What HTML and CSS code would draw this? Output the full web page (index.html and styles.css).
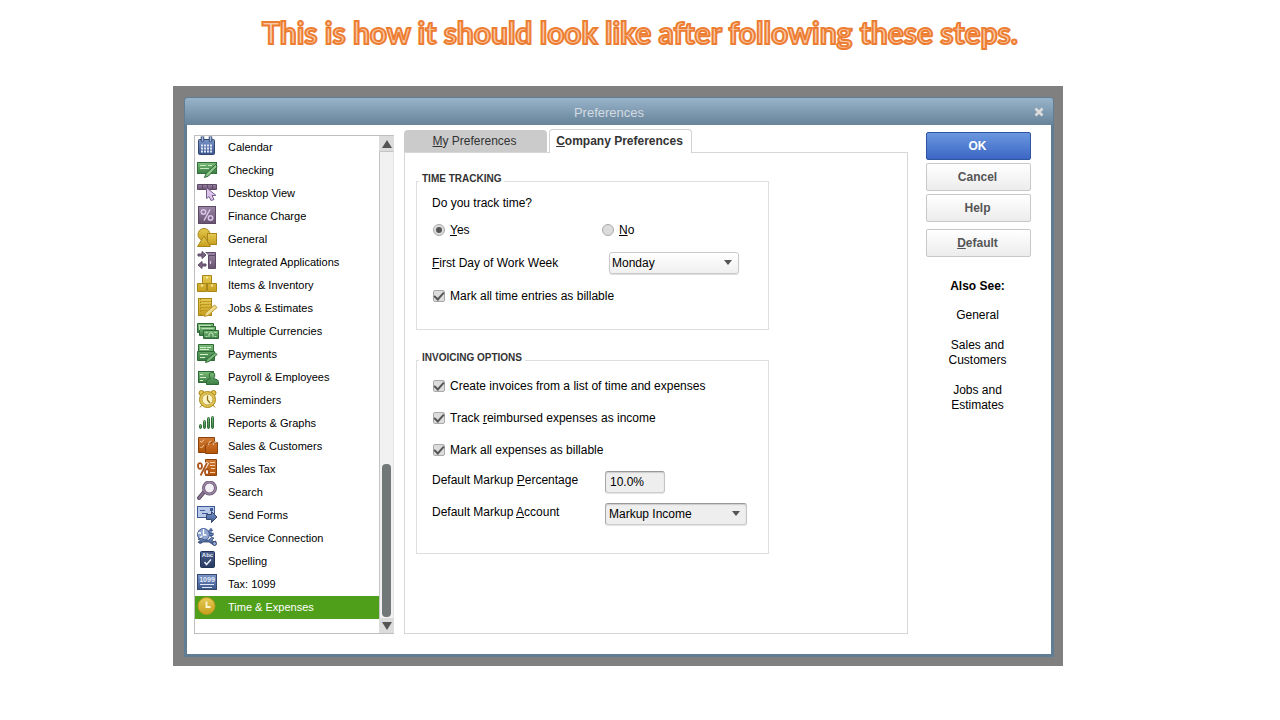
FILE: index.html
```
<!DOCTYPE html>
<html lang="en">
<head>
    <meta charset="utf-8">
    <title>Preferences</title>
    <link rel="stylesheet" href="styles.css">
</head>
<body>
    <!-- shared gradients for the list icons -->
    <svg class="defs" aria-hidden="true">
        <defs>
            <linearGradient id="blue" x1="0" y1="0" x2="0" y2="1"><stop offset="0" stop-color="#7b96c8"/><stop offset="1" stop-color="#3c568f"/></linearGradient>
            <linearGradient id="navy" x1="0" y1="0" x2="0" y2="1"><stop offset="0" stop-color="#4a608c"/><stop offset="1" stop-color="#273a60"/></linearGradient>
            <linearGradient id="green" x1="0" y1="0" x2="0" y2="1"><stop offset="0" stop-color="#7cbd78"/><stop offset="1" stop-color="#3b7d45"/></linearGradient>
            <linearGradient id="purple" x1="0" y1="0" x2="0" y2="1"><stop offset="0" stop-color="#9a86a5"/><stop offset="1" stop-color="#67536f"/></linearGradient>
            <linearGradient id="gold" x1="0" y1="0" x2="0" y2="1"><stop offset="0" stop-color="#e6cb54"/><stop offset="1" stop-color="#c79f1c"/></linearGradient>
            <linearGradient id="orange" x1="0" y1="0" x2="0" y2="1"><stop offset="0" stop-color="#d07a35"/><stop offset="1" stop-color="#b35305"/></linearGradient>
        </defs>
    </svg>

    <h1>This is how it should look like after following these steps.</h1>

    <div class="backdrop">
        <div class="dialog">
            <div class="titlebar">
                <h2>Preferences</h2>
                <button class="close" aria-label="Close">
                    <svg width="10" height="10" viewBox="0 0 10 10"><path d="M1.5 1.5L8.5 8.5M8.5 1.5L1.5 8.5" stroke="#dcdcdc" stroke-width="2.6"/></svg>
                </button>
            </div>

            <div class="content">
                <div class="sidebar">
                    <nav class="categories">
                        <a href="#">
                            <svg viewBox="0 0 24 23"><rect x="2.5" y="3.5" width="16" height="15" rx="1" fill="url(#blue)" stroke="#33476f"/><path d="M6.5 .5v5M14.5 .5v5" stroke="#33476f" stroke-width="3.5"/><path d="M6.5 1v4M14.5 1v4" stroke="#a9bbe0" stroke-width="1.5"/><path d="M5 9.5h11M5 12.5h11M5 15.5h11" stroke="#dfe7f7" stroke-width="2" stroke-dasharray="2 1"/></svg>
                            <span>Calendar</span>
                        </a>
                        <a href="#">
                            <svg viewBox="0 0 24 23"><rect x="1.5" y="3.5" width="19" height="11" fill="url(#green)" stroke="#33703c"/><path d="M4 6.5h6M4 9.5h9M12 6.5h4" stroke="#c9e8c2"/><path d="M20 5L10 14.5 8.5 18.5 12.5 17 21 8z" fill="#8bc486" stroke="#2f6a38"/></svg>
                            <span>Checking</span>
                        </a>
                        <a href="#">
                            <svg viewBox="0 0 24 23"><path d="M1.5 2.5h19v5h-19z" fill="url(#purple)" stroke="#5d4a66"/><path d="M6.5 2v6M11.5 2v6M16.5 2v6" stroke="#5d4a66"/><path d="M10.5 5.5v11l2.500-2 2 4 3-1-2-4h4z" fill="#dcc3ea" stroke="#76608a"/></svg>
                            <span>Desktop View</span>
                        </a>
                        <a href="#">
                            <svg viewBox="0 0 24 23"><rect x="2.5" y="1.5" width="17" height="17" fill="url(#purple)" stroke="#5d4a66"/><circle cx="7.500" cy="7" r="2.2" fill="none" stroke="#dcc3ea" stroke-width="1.5"/><circle cx="14.5" cy="13" r="2.2" fill="none" stroke="#dcc3ea" stroke-width="1.5"/><path d="M14 4.5L8 15.5" stroke="#dcc3ea" stroke-width="1.5"/></svg>
                            <span>Finance Charge</span>
                        </a>
                        <a href="#">
                            <svg viewBox="0 0 24 23"><circle cx="8" cy="6.5" r="6" fill="url(#gold)" stroke="#a8861a"/><rect x="11.5" y="5.5" width="9" height="11" fill="url(#gold)" stroke="#a8861a"/><path d="M8 8L14.5 18.5h-13z" fill="url(#gold)" stroke="#a8861a"/></svg>
                            <span>General</span>
                        </a>
                        <a href="#">
                            <svg viewBox="0 0 24 23"><path d="M2 3h4V.5l4 3.5-4 3.5V5H2zM10 13H6v-2.500L2 14l4 3.5V15h4z" fill="#796382" stroke="#5d4a66"/><path d="M9.5 1.5h10v3h-7M12.5 4.5h7v13h-7z" fill="url(#purple)" stroke="#5d4a66"/><path d="M14.5 10v3" stroke="#d8c8de" stroke-width="1.2"/></svg>
                            <span>Integrated Applications</span>
                        </a>
                        <a href="#">
                            <svg viewBox="0 0 24 23"><path d="M6.5 1.5h9v8h-9zM1.5 9.5h9v8h-9zM11.5 9.5h9v8h-9z" fill="url(#gold)" stroke="#a8861a"/><path d="M10 3.5h2M5 11.5h2M15 11.5h2" stroke="#f6e9a0" stroke-width="2"/></svg>
                            <span>Items &amp; Inventory</span>
                        </a>
                        <a href="#">
                            <svg viewBox="0 0 24 23"><rect x="2.5" y="1.5" width="13" height="17" fill="url(#gold)" stroke="#a8861a"/><path d="M4 4.5h11M4 7.5h11M4 10.5h11M4 13.5h7" stroke="#b8921c" stroke-width=".8"/><path d="M4.5 2v16" stroke="#aa8512" stroke-dasharray="1 2"/><path d="M18.5 8L9.5 16 8.5 19.5 12 18.5 21 10.5z" fill="#f0dc8d" stroke="#b8962c"/></svg>
                            <span>Jobs &amp; Estimates</span>
                        </a>
                        <a href="#">
                            <svg viewBox="0 0 24 23"><g fill="url(#green)" stroke="#2f6a38"><path d="M1.5 3.5h16v9h-16z"/><path d="M3.5 6.5h16v9h-16z"/><path d="M7.5 10.5h15v8h-15z"/></g><path d="M4 5.5h11M3.5 5v5M5.5 8.5h12M9.5 12.5h2M9.5 16.5h2M18.5 12.5h2M18.5 16.5h2" stroke="#b9dfb2"/><path d="M13 17v-3q2-3 4 0v3" fill="none" stroke="#c9e8c2"/></svg>
                            <span>Multiple Currencies</span>
                        </a>
                        <a href="#">
                            <svg viewBox="0 0 24 23"><path d="M2.5 1.5h15v7h-15zM1.5 8.5h17v9h-17z" fill="url(#green)" stroke="#2f6a38"/><path d="M4 4.5h6M11 4.5h4M4 6.5h9M4 11.5h8M4 14.5h5" stroke="#d5efce"/><path d="M19 9.5L11 16 9.5 19.5 13 18.5 21 11.5z" fill="#78b777" stroke="#2f6a38"/></svg>
                            <span>Payments</span>
                        </a>
                        <a href="#">
                            <svg viewBox="0 0 24 23"><rect x="2.5" y="5.5" width="15" height="11" fill="url(#green)" stroke="#2f6a38"/><path d="M4 8.5h3M4 11.5h6M4 14.5h3" stroke="#d5efce"/><path d="M10.5 18.5v-3q0-2 4-3-2-2-1-5 2.500-3 5 0 1 3-1 5 5 1 5 3v3z" fill="url(#green)" stroke="#2f6a38"/></svg>
                            <span>Payroll &amp; Employees</span>
                        </a>
                        <a href="#">
                            <svg viewBox="0 0 24 23"><g fill="#e3c553" stroke="#a8861a"><circle cx="5.5" cy="4" r="2.5"/><circle cx="17.5" cy="4" r="2.5"/><path d="M6 16l-2 2.500M17 16l2 2.500"/><circle cx="11.5" cy="10.5" r="8"/></g><circle cx="11.5" cy="10.5" r="5.5" fill="#fbf3c6" stroke="#b99c34"/><path d="M11.5 6.5v4.500l2.500 3" fill="none" stroke="#8f7217" stroke-width="1.3"/></svg>
                            <span>Reminders</span>
                        </a>
                        <a href="#">
                            <svg viewBox="0 0 24 23"><g fill="url(#green)" stroke="#2f6a38"><rect x="3.5" y="12.5" width="2" height="4" rx="1"/><rect x="7.5" y="8.5" width="2" height="8" rx="1"/><rect x="11.5" y="5.5" width="2" height="11" rx="1"/><rect x="15.5" y="4.5" width="2" height="12" rx="1"/></g></svg>
                            <span>Reports &amp; Graphs</span>
                        </a>
                        <a href="#">
                            <svg viewBox="0 0 24 23"><path d="M2.5 2.5h16v15h-16z" fill="url(#orange)" stroke="#8c430b"/><path d="M4 6l1.500 1.500L8 4.500M4 11.500L5.500 13 8 10" fill="none" stroke="#f5cfa8"/><path d="M9.500 10.500l2-2h3l2-2 2 2 3-1v11h-12z" fill="url(#orange)" stroke="#8c430b"/><path d="M12.500 10q0-4 3-4M17.500 10q0-4 3-4" fill="none" stroke="#f0c394"/></svg>
                            <span>Sales &amp; Customers</span>
                        </a>
                        <a href="#">
                            <svg viewBox="0 0 24 23"><path d="M9.5 1.5h11v16h-11z" fill="url(#orange)" stroke="#8c430b"/><path d="M14 4.5h5M14 7.5h5M15 10.5h4M14 14.5h5" stroke="#f5cfa8"/><path d="M11.500 4.500L4 18" stroke="#fff" stroke-width="3.5"/><path d="M11 5L4.500 17.500" stroke="#a9531a" stroke-width="1.8"/><g fill="#fff" stroke="#a9531a" stroke-width="1.8"><ellipse cx="4" cy="8" rx="2" ry="2.8"/><ellipse cx="11" cy="14" rx="2" ry="2.8"/></g></svg>
                            <span>Sales Tax</span>
                        </a>
                        <a href="#">
                            <svg viewBox="0 0 24 23"><path d="M8.500 10.500L3 17" stroke="#57465f" stroke-width="4" stroke-linecap="round"/><path d="M8.500 10.500L3 17" stroke="#88748f" stroke-width="2" stroke-linecap="round"/><circle cx="13.5" cy="7" r="6" fill="#f3eff6" stroke="#67536f" stroke-width="3"/><circle cx="13.5" cy="7" r="6" fill="none" stroke="#9c88a6" stroke-width="1.5"/></svg>
                            <span>Search</span>
                        </a>
                        <a href="#">
                            <svg viewBox="0 0 24 23"><rect x="1.5" y="2.5" width="17" height="11" fill="#b9c9ea" stroke="#3f5a95"/><path d="M4 6.5h5M6 9.5h6" stroke="#3f5a95"/><path d="M14 4h3v3h-3z" fill="#3f5a95"/><path d="M10.5 10.5h5v-3l5.500 5.500-5.500 5.500v-3h-5z" fill="url(#blue)" stroke="#33476f"/></svg>
                            <span>Send Forms</span>
                        </a>
                        <a href="#">
                            <svg viewBox="0 0 24 23"><circle cx="7.5" cy="7.5" r="6" fill="#8fa4cf" stroke="#3f5a95"/><path d="M7.5 2v6h3M2 6h3M4 11l2-2" fill="none" stroke="#fff" stroke-width="1.4"/><path d="M17 3.5q-4-1.500-4 1t4 2q1 3-4 1.500M15 1v9" fill="none" stroke="#3f5a95" stroke-width="1.3"/><path d="M2 12q4-2 6 1h5q2-4 5-2l-2 2 1 2 3-1q-1 4-4 3l-3-2H7q-3 3-5 0l3-1z" fill="url(#blue)" stroke="#33476f" stroke-width=".8"/><circle cx="18.5" cy="16.5" r="2" fill="#8fa4cf" stroke="#33476f"/></svg>
                            <span>Service Connection</span>
                        </a>
                        <a href="#">
                            <svg viewBox="0 0 24 23"><rect x="4.5" y="1.5" width="14" height="16" rx="1" fill="url(#navy)" stroke="#22345a"/><text x="11.5" y="7" class="tiny">Abc</text><path d="M8.500 12l2 2.500 4.500-5" fill="none" stroke="#e5ecf8" stroke-width="1.5"/></svg>
                            <span>Spelling</span>
                        </a>
                        <a href="#">
                            <svg viewBox="0 0 24 23"><rect x="1.5" y="1.5" width="19" height="15" fill="url(#blue)" stroke="#33476f"/><text x="11" y="8.5" class="small">1099</text><path d="M4 11.5h14M6 14.5h10" stroke="#dfe7f7"/></svg>
                            <span>Tax: 1099</span>
                        </a>
                        <a href="#" class="selected">
                            <svg viewBox="0 0 24 23"><circle cx="10.5" cy="10" r="8.5" fill="url(#gold)" stroke="#bb981d"/><path d="M10.500 5.500V11h4" fill="none" stroke="#fdf6cf" stroke-width="1.8"/></svg>
                            <span>Time &amp; Expenses</span>
                        </a>
                    </nav>
                    <div class="scrollbar">
                        <button class="arrow up" aria-label="Scroll up"></button>
                        <div class="track"><div class="thumb"></div></div>
                        <button class="arrow down" aria-label="Scroll down"></button>
                    </div>
                </div>

                <div class="settings">
                    <div class="tabs">
                        <button class="tab"><u>M</u>y Preferences</button>
                        <button class="tab active"><u>C</u>ompany Preferences</button>
                    </div>
                    <div class="panel">
                        <fieldset class="time">
                            <legend>TIME TRACKING</legend>
                            <p>Do you track time?</p>
                            <div class="row">
                                <label class="choice"><input type="radio" name="track" checked><span><u>Y</u>es</span></label>
                                <label class="choice"><input type="radio" name="track"><span><u>N</u>o</span></label>
                            </div>
                            <div class="row">
                                <label for="first-day"><u>F</u>irst Day of Work Week</label>
                                <div class="dropdown day">
                                    <select id="first-day"><option>Monday</option></select>
                                </div>
                            </div>
                            <div class="row">
                                <label class="check"><input type="checkbox" checked><span>Mark all time entries as billable</span></label>
                            </div>
                        </fieldset>

                        <fieldset class="invoicing">
                            <legend>INVOICING OPTIONS</legend>
                            <div class="row">
                                <label class="check"><input type="checkbox" checked><span>Create invoices from a list of time and expenses</span></label>
                            </div>
                            <div class="row">
                                <label class="check"><input type="checkbox" checked><span>Track <u>r</u>eimbursed expenses as income</span></label>
                            </div>
                            <div class="row">
                                <label class="check"><input type="checkbox" checked><span>Mark all expenses as billable</span></label>
                            </div>
                            <div class="row">
                                <label for="markup">Default Markup <u>P</u>ercentage</label>
                                <input class="sunken" type="text" id="markup" value="10.0%">
                            </div>
                            <div class="row">
                                <label for="account">Default Markup <u>A</u>ccount</label>
                                <div class="dropdown account">
                                    <select class="sunken" id="account"><option>Markup Income</option></select>
                                </div>
                            </div>
                        </fieldset>
                    </div>
                </div>

                <div class="actions">
                    <button class="btn primary">OK</button>
                    <button class="btn">Cancel</button>
                    <button class="btn">Help</button>
                    <button class="btn default"><u>D</u>efault</button>
                    <h3>Also See:</h3>
                    <a href="#">General</a>
                    <a href="#">Sales and Customers</a>
                    <a href="#">Jobs and Estimates</a>
                </div>
            </div>
        </div>
    </div>
</body>
</html>
```
FILE: styles.css
```
* {
    box-sizing: border-box;
}
body {
    margin: 0;
    background-color: #fff;
    color: #000;
    font-family: "Liberation Sans", Arial, sans-serif;
    font-size: 12px;
    line-height: 15px;
}
.defs {
    position: absolute;
    width: 0;
    height: 0;
}
h1 {
    margin: 0;
    padding: 12px 0 34px;
    font-family: Lato, Calibri, sans-serif;
    font-size: 30px;
    line-height: 40px;
    font-weight: 700;
    text-align: center;
    color: #f8cbad;
    -webkit-text-stroke: 2px #ed7d31;
}
.backdrop {
    margin: 0 217px 0 173px;
    padding: 11px 9px 9px 11px;
    background-color: #808080;
}
.dialog {
    border: 1px solid #5f7e95;
    border-width: 0 3px 3px;
    border-radius: 4px 4px 0 0;
    background-color: #fff;
}
.titlebar {
    position: relative;
    display: flex;
    align-items: center;
    justify-content: center;
    height: 28px;
    margin: 0 -2px;
    border-top: 1px solid #5f7e95;
    border-radius: 3px 3px 0 0;
    background: linear-gradient(#98b4ca, #66839a);
}
h2 {
    margin: 0;
    padding: 2px 20px 0 0;
    font-size: 13px;
    font-weight: normal;
    color: #d3dae0;
}
.close {
    position: absolute;
    right: 9px;
    top: 9px;
    display: flex;
    padding: 0;
    border: none;
    background: none;
}
.content {
    display: flex;
    padding: 4px 20px 20px 7px;
}

/* category list */
.sidebar {
    display: flex;
    width: 200px;
    margin-top: 6px;
    margin-right: 10px;
    border: 1px solid #bfbfbf;
    border-right: none;
}
.categories {
    flex: 1;
    padding-bottom: 14px;
}
.categories a {
    display: flex;
    align-items: center;
    height: 23px;
    padding-left: 1px;
    font-size: 11px;
    color: #000;
    text-decoration: none;
}
.categories svg {
    width: 24px;
    height: 23px;
    margin-right: 8px;
}
.categories .selected {
    background-color: #4f9f1a;
    color: #fff;
}
.tiny,
.small {
    fill: #e5ecf8;
    font-size: 6px;
    font-weight: bold;
    text-anchor: middle;
}
.small {
    font-size: 7px;
}
.scrollbar {
    display: flex;
    flex-direction: column;
    width: 15px;
}
.arrow {
    display: flex;
    align-items: center;
    justify-content: center;
    height: 15px;
    padding: 0;
    border: none;
    background-color: #dcdcdc;
}
.arrow::before {
    content: "";
    border: 5px solid transparent;
    border-top: none;
    border-bottom: 8px solid #555;
}
.down::before {
    border-top: 8px solid #555;
    border-bottom: none;
}
.track {
    display: flex;
    flex: 1;
    align-items: flex-end;
    justify-content: center;
    padding-bottom: 1px;
    border-left: 1px solid #c4c4c4;
    border-right: 1px solid #e4e4e4;
    border-top: 1px solid #c4c4c4;
    background-color: #f1f1f1;
}
.thumb {
    width: 9px;
    height: 33%;
    border-radius: 4px;
    background-color: #727877;
}

/* tabs and panel */
.settings {
    display: flex;
    flex: 1;
    flex-direction: column;
    margin-right: 18px;
}
.tabs {
    display: flex;
    align-items: flex-end;
    gap: 2px;
    height: 24px;
    margin-bottom: -1px;
}
.tab {
    width: 143px;
    height: 23px;
    padding: 0 2px 1px 0;
    border: none;
    border-radius: 4px 4px 0 0;
    background-color: #cbcbcb;
    font-family: inherit;
    font-size: 12px;
    color: #333;
    white-space: nowrap;
}
.tab.active {
    position: relative;
    height: 24px;
    border: 1px solid #d2d2d2;
    border-bottom: none;
    background-color: #fff;
    font-weight: bold;
}
.panel {
    flex: 1;
    padding: 20px 11px;
    border: 1px solid #d6d6d6;
}
fieldset {
    display: flex;
    flex-direction: column;
    max-width: 353px;
    margin: 0 0 22px;
    padding: 6px 15px 0;
    border: 1px solid #dedede;
}
legend {
    margin-left: -13px;
    padding: 0 3px 5px;
    font-size: 10px;
    font-weight: bold;
    line-height: 12px;
    color: #333;
}
fieldset p {
    margin: 0 0 8px;
}
.row {
    display: flex;
    align-items: center;
    height: 22px;
}
.time {
    height: 157px;
}
.time .row {
    margin-bottom: 11px;
}
.time .row > label:first-child {
    width: 177px;
}
.invoicing {
    height: 202px;
}
.invoicing .row {
    margin-bottom: 10px;
}
.invoicing .row > label[for] {
    width: 173px;
    padding-bottom: 3px;
}
.row .choice,
.row .check {
    display: flex;
    align-items: center;
    gap: 5px;
    padding-left: 1px;
}
.time .row > .choice:first-child {
    width: 169px;
}
.time .row > .check:first-child {
    width: auto;
}
input[type="radio"],
input[type="checkbox"] {
    display: flex;
    align-items: center;
    justify-content: center;
    width: 12px;
    height: 12px;
    margin: 0;
    appearance: none;
    border: 1px solid #a9a9a9;
    border-radius: 2px;
    background-color: #dcdcdc;
}
input[type="radio"] {
    border-radius: 50%;
}
input[type="radio"]:checked::before {
    content: "";
    width: 6px;
    height: 6px;
    border-radius: 50%;
    background-color: #555;
}
input[type="checkbox"]:checked::before {
    content: "";
    width: 8px;
    height: 4px;
    margin-bottom: 2px;
    border: solid #555;
    border-width: 0 0 2px 2px;
    transform: rotate(-48deg);
}
select,
input[type="text"] {
    width: 100%;
    height: 22px;
    padding: 0 3px;
    appearance: none;
    border: 1px solid #c9c9c9;
    border-radius: 3px;
    background: linear-gradient(#fff, #f0f0f0);
    box-shadow: 0 1px 1px #ddd;
    font-family: inherit;
    font-size: 12px;
    color: #000;
}
select.sunken,
input.sunken {
    border-color: #999 #c4c4c4 #ccc #aaa;
    background: #eee;
    box-shadow: inset 0 1px 1px #ccc, 0 1px 1px #e4e4e4;
}
input[type="text"] {
    width: 60px;
    padding-left: 4px;
}
.dropdown {
    position: relative;
}
.day {
    width: 130px;
}
.day select {
    padding-left: 2px;
}
.account {
    width: 142px;
}
.dropdown::after {
    content: "";
    position: absolute;
    top: 8px;
    right: 7px;
    border: 4px solid transparent;
    border-top: 5px solid #555;
    border-bottom: none;
}

/* right column */
.actions {
    display: flex;
    flex-direction: column;
    width: 105px;
    padding-top: 3px;
    text-align: center;
}
.btn {
    height: 28px;
    margin-bottom: 3px;
    padding: 0 2px 0 0;
    border: 1px solid #c8c8c8;
    border-radius: 2px;
    background: linear-gradient(#fff, #ececec);
    font-family: inherit;
    font-size: 12px;
    font-weight: bold;
    color: #555;
}
.primary {
    border-color: #2f559f;
    background: linear-gradient(#6a97de, #3c66c4);
    color: #fff;
}
.default {
    margin-top: 4px;
}
h3 {
    margin: 19px 2px 14px 0;
    font-size: 12px;
}
.actions a {
    margin: 0 20px 15px 18px;
    color: #000;
    text-decoration: none;
}
```
